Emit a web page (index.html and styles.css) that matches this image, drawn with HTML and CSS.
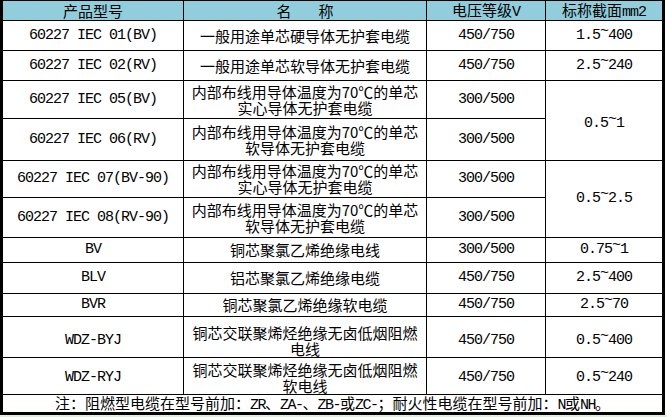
FILE: index.html
```html
<!DOCTYPE html>
<html lang="zh-CN">
<head>
<meta charset="utf-8">
<title>电线电缆型号规格</title>
<link rel="stylesheet" href="styles.css">
</head>
<body>
<div class="page">
  <div class="spec">
    <div class="cell hd"><span>产品型号</span></div>
    <div class="cell hd"><span>名<span class="gap"></span>称</span></div>
    <div class="cell hd"><span>电压等级<span class="m">V</span></span></div>
    <div class="cell hd"><span>标称截面<span class="m">mm2</span></span></div>

    <div class="cell m"><span>60227 IEC 01(BV)</span></div>
    <div class="cell"><span>一般用途单芯硬导体无护套电缆</span></div>
    <div class="cell m"><span>450/750</span></div>
    <div class="cell m"><span>1.5<span class="t">~</span>400</span></div>

    <div class="cell m"><span>60227 IEC 02(RV)</span></div>
    <div class="cell"><span>一般用途单芯软导体无护套电缆</span></div>
    <div class="cell m"><span>450/750</span></div>
    <div class="cell m"><span>2.5<span class="t">~</span>240</span></div>

    <div class="cell m"><span>60227 IEC 05(BV)</span></div>
    <div class="cell"><span>内部布线用导体温度为70℃的单芯<br>实心导体无护套电缆</span></div>
    <div class="cell m"><span>300/500</span></div>
    <div class="cell m span2 dn"><span>0.5<span class="t">~</span>1</span></div>

    <div class="cell m"><span>60227 IEC 06(RV)</span></div>
    <div class="cell"><span>内部布线用导体温度为70℃的单芯<br>软导体无护套电缆</span></div>
    <div class="cell m"><span>300/500</span></div>

    <div class="cell m"><span>60227 IEC 07(BV-90)</span></div>
    <div class="cell"><span>内部布线用导体温度为70℃的单芯<br>实心导体无护套电缆</span></div>
    <div class="cell m"><span>300/500</span></div>
    <div class="cell m span2"><span>0.5<span class="t">~</span>2.5</span></div>

    <div class="cell m"><span>60227 IEC 08(RV-90)</span></div>
    <div class="cell"><span>内部布线用导体温度为70℃的单芯<br>软导体无护套电缆</span></div>
    <div class="cell m"><span>300/500</span></div>

    <div class="cell m"><span>BV</span></div>
    <div class="cell"><span>铜芯聚氯乙烯绝缘电线</span></div>
    <div class="cell m"><span>300/500</span></div>
    <div class="cell m"><span>0.75<span class="t">~</span>1</span></div>

    <div class="cell m"><span>BLV</span></div>
    <div class="cell"><span>铝芯聚氯乙烯绝缘电缆</span></div>
    <div class="cell m"><span>450/750</span></div>
    <div class="cell m"><span>2.5<span class="t">~</span>400</span></div>

    <div class="cell m"><span>BVR</span></div>
    <div class="cell"><span>铜芯聚氯乙烯绝缘软电缆</span></div>
    <div class="cell m"><span>450/750</span></div>
    <div class="cell m"><span>2.5<span class="t">~</span>70</span></div>

    <div class="cell m low"><span>WDZ-BYJ</span></div>
    <div class="cell low"><span>铜芯交联聚烯烃绝缘无卤低烟阻燃<br>电线</span></div>
    <div class="cell m low"><span>450/750</span></div>
    <div class="cell m low"><span>0.5<span class="t">~</span>400</span></div>

    <div class="cell m low2"><span>WDZ-RYJ</span></div>
    <div class="cell low2"><span>铜芯交联聚烯烃绝缘无卤低烟阻燃<br>软电线</span></div>
    <div class="cell m low2"><span>450/750</span></div>
    <div class="cell m low2"><span>0.5<span class="t">~</span>240</span></div>

    <div class="cell note"><span>注：阻燃型电缆在型号前加：<span class="n">ZR</span>、<span class="n">ZA-</span>、<span class="n">ZB-</span>或<span class="n">ZC-</span>；耐火性电缆在型号前加：<span class="n">N</span>或<span class="n">NH</span>。</span></div>
  </div>
  <div class="strip"></div>
</div>
</body>
</html>
```
FILE: styles.css
```css
html, body {
  margin: 0;
  padding: 0;
  background: #ffffff;
}

.page {
  width: 667px;
  height: 417px;
  overflow: hidden;
}

.spec {
  display: grid;
  width: max-content;
  grid-template-columns: 180px 242px 118px 116px;
  grid-template-rows: 19px 29px 29px 37px 41px 36px 39px 24px 30px 22px 40px 36px 17px;
  gap: 1px;
  padding: 1px 3px 3px 3px;
  background: #000;
}

.cell {
  display: flex;
  align-items: center;
  justify-content: center;
  text-align: center;
  background: #fff;
  color: #000;
  font-family: "Noto Sans CJK SC", sans-serif;
  font-size: 15px;
  line-height: 16px;
  white-space: nowrap;
}

.hd {
  background: #92cddc;
  line-height: 17px;
}

.gap {
  display: inline-block;
  width: 27px;
}

.m {
  font-family: "Liberation Mono", "Noto Sans CJK SC", monospace;
  letter-spacing: -1px;
}

.t {
  display: inline-block;
  transform: translateY(-4px);
}

.span2 {
  grid-row: span 2;
}

.dn {
  padding-top: 6px;
}

.low {
  padding-top: 7px;
}

.low2 {
  padding-top: 3px;
}

.note {
  grid-column: 1 / -1;
  line-height: 15px;
}

.n {
  font-family: "Liberation Mono", monospace;
  letter-spacing: -1.5px;
}

.strip {
  height: 2px;
  background: #dcefdc;
}
```
